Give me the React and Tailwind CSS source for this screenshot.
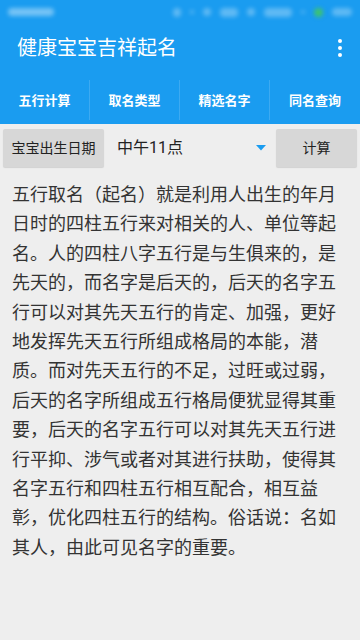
import React from "react";

const FONT = { fontFamily: 'Roboto, "Noto Sans CJK SC", "Noto Sans", sans-serif' };

function StatusBar() {
  return (
    <div className="flex items-center h-6 bg-[#1a9cf0] px-[8px] overflow-hidden">
      <div className="h-[8px] w-[46px] rounded bg-white/40 blur-[2px]" />
      <div className="flex-1" />
      <div className="flex items-center gap-[9px]">
        <div className="h-[9px] w-[8px] rounded bg-white/30 blur-[2px]" />
        <div className="h-[4px] w-[4px] rounded bg-white/30 blur-[2px]" />
        <div className="h-[8px] w-[8px] rounded bg-white/30 blur-[2px]" />
        <div className="h-[9px] w-[18px] rounded bg-white/30 blur-[2px]" />
        <div className="h-[8px] w-[8px] rounded bg-white/30 blur-[2px]" />
        <div className="h-[9px] w-[28px] rounded bg-white/30 blur-[2px]" />
        <div className="h-[4px] w-[4px] rounded bg-white/25 blur-[2px]" />
        <div className="h-[9px] w-[9px] rounded-full bg-[#3ec46d] blur-[2px]" />
        <div className="h-[8px] w-[20px] rounded bg-white/30 blur-[2px]" />
      </div>
    </div>
  );
}

function Tabs() {
  const tabs = ["五行计算", "取名类型", "精选名字", "同名查询"];
  return (
    <div className="grid grid-cols-4 h-[48px] bg-[#1a9cf0] divide-x divide-white/15 py-[4px]">
      {tabs.map((t) => (
        <div key={t} className="flex items-center justify-center pt-[2px]">
          <span className="text-white text-[13px] font-bold">{t}</span>
        </div>
      ))}
    </div>
  );
}

export default function App() {
  const text =
    "五行取名（起名）就是利用人出生的年月日时的四柱五行来对相关的人、单位等起名。人的四柱八字五行是与生俱来的，是先天的，而名字是后天的，后天的名字五行可以对其先天五行的肯定、加强，更好地发挥先天五行所组成格局的本能，潜质。而对先天五行的不足，过旺或过弱，后天的名字所组成五行格局便犹显得其重要，后天的名字五行可以对其先天五行进行平抑、涉气或者对其进行扶助，使得其名字五行和四柱五行相互配合，相互益彰，优化四柱五行的结构。俗话说：名如其人，由此可见名字的重要。";
  return (
    <div className="w-[360px] h-[640px] bg-[#eeeeee] overflow-hidden" style={FONT}>
      <StatusBar />
      <div className="flex items-center h-[52px] bg-[#1a9cf0] pl-[17px] pr-[18px] pb-[4px]">
        <div className="flex-1 text-white text-[20px] leading-none">健康宝宝吉祥起名</div>
        <div className="flex flex-col items-center gap-[3px]">
          <div className="w-[4px] h-[4px] rounded-full bg-white" />
          <div className="w-[4px] h-[4px] rounded-full bg-white" />
          <div className="w-[4px] h-[4px] rounded-full bg-white" />
        </div>
      </div>
      <Tabs />
      <div className="flex items-center mt-[5px] px-[3px] h-[38px]">
        <div className="flex items-center justify-center w-[101px] h-full rounded-[2px] bg-[#d7d7d7] shadow-[0_1px_1px_rgba(0,0,0,0.12)] text-[14px] text-[#222]">
          宝宝出生日期
        </div>
        <div className="flex-1 flex items-center h-full pl-[13px] pr-[10px]">
          <span className="flex-1 text-[16px] text-[#222]">中午11点</span>
          <svg width="10" height="6" viewBox="0 0 10 6">
            <polygon points="0,0 10,0 5,5.5" fill="#1a9cf0" />
          </svg>
        </div>
        <div className="flex items-center justify-center w-[81px] h-full rounded-[2px] bg-[#d7d7d7] shadow-[0_1px_1px_rgba(0,0,0,0.12)] text-[14px] text-[#222]">
          计算
        </div>
      </div>
      <p className="mt-[13px] px-[12px] text-[18px] leading-[29.4px] text-[#333]">{text}</p>
    </div>
  );
}
